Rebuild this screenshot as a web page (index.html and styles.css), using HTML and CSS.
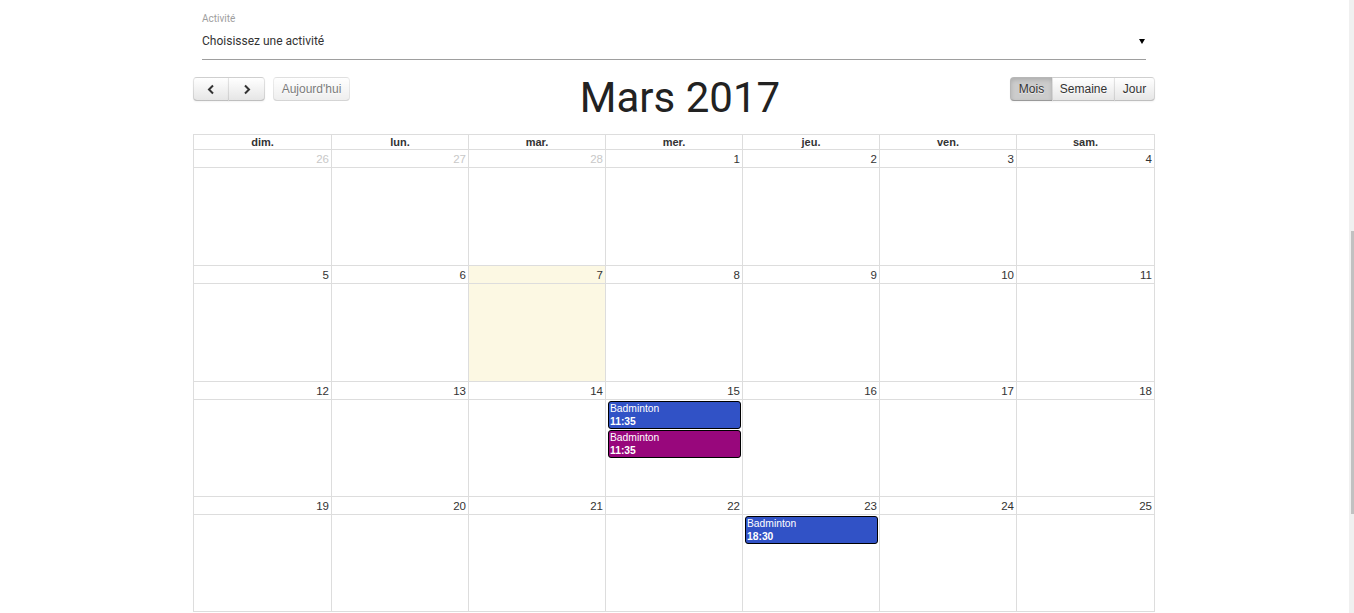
FILE: index.html
```html
<!DOCTYPE html>
<html lang="fr">
<head>
<meta charset="utf-8">
<title>Calendrier</title>
<link rel="stylesheet" href="styles.css">
</head>
<body>
<div class="page">
  <div class="field">
    <div class="field-label">Activité</div>
    <div class="field-select"><span>Choisissez une activité</span><span class="caret"></span></div>
  </div>

  <div class="toolbar">
    <div class="tb-left">
      <div class="btn-group">
        <button class="btn btn-prev" aria-label="prev"><svg width="8" height="11" viewBox="0 0 8 11"><polyline points="6,1.5 2,5.5 6,9.5" fill="none" stroke="#333" stroke-width="2"/></svg></button>
        <button class="btn btn-next" aria-label="next"><svg width="8" height="11" viewBox="0 0 8 11"><polyline points="2,1.5 6,5.5 2,9.5" fill="none" stroke="#333" stroke-width="2"/></svg></button>
      </div>
      <button class="btn btn-today" disabled>Aujourd'hui</button>
    </div>
    <h2 class="title">Mars 2017</h2>
    <div class="btn-group">
      <button class="btn btn-mois active">Mois</button>
      <button class="btn btn-semaine">Semaine</button>
      <button class="btn btn-jour">Jour</button>
    </div>
  </div>

  <div class="cal">
    <div class="cal-head">
      <div class="hcell">dim.</div>
      <div class="hcell">lun.</div>
      <div class="hcell">mar.</div>
      <div class="hcell">mer.</div>
      <div class="hcell">jeu.</div>
      <div class="hcell">ven.</div>
      <div class="hcell">sam.</div>
    </div>
    <div class="cal-body">
      <div class="week">
        <div class="day other"><div class="num">26</div></div>
        <div class="day other"><div class="num">27</div></div>
        <div class="day other"><div class="num">28</div></div>
        <div class="day"><div class="num">1</div></div>
        <div class="day"><div class="num">2</div></div>
        <div class="day"><div class="num">3</div></div>
        <div class="day"><div class="num">4</div></div>
      </div>
      <div class="week">
        <div class="day"><div class="num">5</div></div>
        <div class="day"><div class="num">6</div></div>
        <div class="day today"><div class="num">7</div></div>
        <div class="day"><div class="num">8</div></div>
        <div class="day"><div class="num">9</div></div>
        <div class="day"><div class="num">10</div></div>
        <div class="day"><div class="num">11</div></div>
      </div>
      <div class="week">
        <div class="day"><div class="num">12</div></div>
        <div class="day"><div class="num">13</div></div>
        <div class="day"><div class="num">14</div></div>
        <div class="day"><div class="num">15</div>
          <div class="events">
            <div class="event ev-blue"><div class="ev-title">Badminton</div><div class="ev-time">11:35</div></div>
            <div class="event ev-purple"><div class="ev-title">Badminton</div><div class="ev-time">11:35</div></div>
          </div>
        </div>
        <div class="day"><div class="num">16</div></div>
        <div class="day"><div class="num">17</div></div>
        <div class="day"><div class="num">18</div></div>
      </div>
      <div class="week">
        <div class="day"><div class="num">19</div></div>
        <div class="day"><div class="num">20</div></div>
        <div class="day"><div class="num">21</div></div>
        <div class="day"><div class="num">22</div></div>
        <div class="day"><div class="num">23</div>
          <div class="events">
            <div class="event ev-blue"><div class="ev-title">Badminton</div><div class="ev-time">18:30</div></div>
          </div>
        </div>
        <div class="day"><div class="num">24</div></div>
        <div class="day"><div class="num">25</div></div>
      </div>
    </div>
  </div>
</div>
<div class="scrollbar"><div class="thumb"></div></div>
</body>
</html>
```

FILE: styles.css
```css
* { box-sizing: border-box; }

html, body {
  margin: 0;
  padding: 0;
  background: #fff;
  overflow: hidden;
}

body {
  font-family: "Liberation Sans", Arial, sans-serif;
  color: #333;
  height: 613px;
}

.page {
  width: 962px;
  margin-left: 193px;
}

/* Select field */
.field {
  padding: 13px 9px 0 9px;
}

.field-label {
  font-family: Roboto, "Liberation Sans", sans-serif;
  font-size: 10px;
  line-height: 12px;
  color: #9e9e9e;
}

.field-select {
  margin-top: 8px;
  display: flex;
  justify-content: space-between;
  align-items: center;
  font-family: Roboto, "Liberation Sans", sans-serif;
  font-size: 12px;
  line-height: 16px;
  color: #333;
  padding-bottom: 10px;
  border-bottom: 1px solid #9e9e9e;
}

.caret {
  width: 0;
  height: 0;
  border-left: 3px solid transparent;
  border-right: 3px solid transparent;
  border-top: 5px solid #000;
  margin-right: 1px;
  margin-top: 1px;
}

/* Toolbar */
.toolbar {
  margin-top: 17px;
  display: flex;
  align-items: flex-start;
  margin-bottom: 15px;
}

.tb-left {
  display: flex;
}

.title {
  flex: 1;
  margin: 0;
  text-align: center;
  font-family: Roboto, "Liberation Sans", sans-serif;
  font-weight: 400;
  font-size: 42px;
  line-height: 42px;
  color: #222;
}

.btn-group {
  display: flex;
}

.btn {
  height: 24px;
  margin: 0;
  padding: 0;
  font-family: "Liberation Sans", Arial, sans-serif;
  font-size: 12px;
  color: #333;
  border: 1px solid;
  border-color: rgba(0,0,0,.1) rgba(0,0,0,.1) rgba(0,0,0,.25);
  background-color: #f5f5f5;
  background-image: linear-gradient(to bottom, #fff, #e6e6e6);
  text-shadow: 0 1px 1px rgba(255,255,255,.75);
  box-shadow: inset 0 1px 0 rgba(255,255,255,.2), 0 1px 2px rgba(0,0,0,.05);
  border-radius: 0;
  display: flex;
  align-items: center;
  justify-content: center;
}

.btn-group .btn + .btn { margin-left: -1px; }
.btn-group .btn:first-child { border-radius: 4px 0 0 4px; }
.btn-group .btn:last-child { border-radius: 0 4px 4px 0; }

.btn-prev { width: 36px; }
.btn-next { width: 37px; }

.btn-today {
  width: 77px;
  margin-left: 8px;
  border-radius: 4px;
  opacity: .65;
  box-shadow: none;
}

.btn-mois { width: 43px; }
.btn-semaine { width: 63px; }
.btn-jour { width: 41px; }

.btn.active {
  background-color: #ccc;
  background-image: none;
  box-shadow: inset 0 2px 4px rgba(0,0,0,.15), 0 1px 2px rgba(0,0,0,.05);
}

/* Calendar */
.cal {
  border-top: 1px solid #ddd;
  border-left: 1px solid #ddd;
}

.cal-head,
.week {
  display: grid;
  grid-template-columns: 138px repeat(5, 137px) 138px;
}

.hcell {
  height: 15px;
  border-right: 1px solid #ddd;
  border-bottom: 1px solid #ddd;
  text-align: center;
  font-weight: bold;
  font-size: 11px;
  line-height: 14px;
}

.cal-body {
  display: grid;
  grid-template-rows: 116px 116px 115px 115px;
}

.day {
  border-right: 1px solid #ddd;
  border-bottom: 1px solid #ddd;
  display: flex;
  flex-direction: column;
}

.day.today {
  background: #fcf8e3;
}

.num {
  height: 18px;
  border-bottom: 1px solid #ddd;
  text-align: right;
  padding: 1px 2px 0 0;
  font-size: 11.5px;
  line-height: 16px;
  color: #333;
}

.day.other .num {
  color: #c8c8c8;
}

.events {
  display: flex;
  flex-direction: column;
  gap: 1px;
  padding: 1px 1px 0 2px;
}

.event {
  height: 28px;
  border: 1px solid #000;
  border-radius: 3px;
  padding: 0 1px;
  color: #fff;
  font-size: 10.3px;
  line-height: 13px;
}

.ev-blue { background: #3152c6; }
.ev-purple { background: #98077c; }

.ev-time { font-weight: bold; }

/* overlay scrollbar */
.scrollbar {
  position: fixed;
  top: 0;
  right: 0;
  width: 5px;
  height: 613px;
  background: #f0f0f0;
}

.thumb {
  position: absolute;
  top: 231px;
  right: 0;
  width: 3px;
  height: 283px;
  background: #c1c1c1;
}
```
